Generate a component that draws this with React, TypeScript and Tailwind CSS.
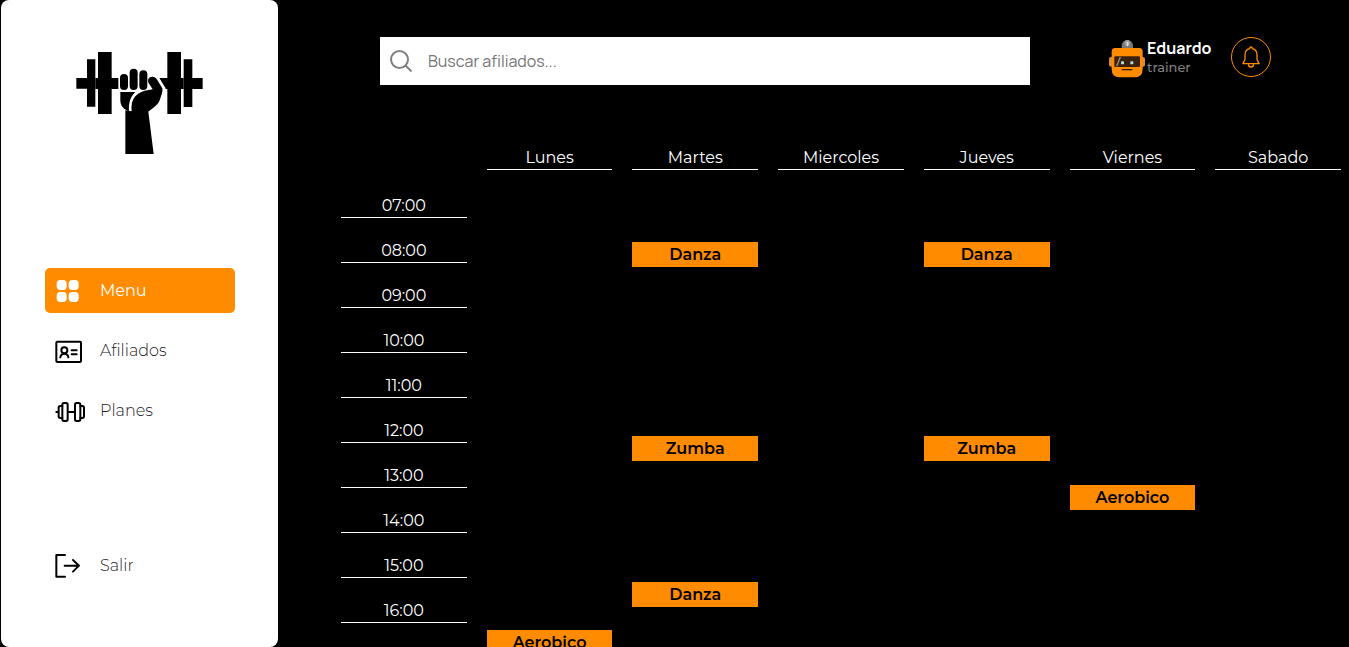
import React from "react";

type Day = { name: string; classes: Record<number, string> };

const HOURS = [7, 8, 9, 10, 11, 12, 13, 14, 15, 16];

const DAYS: Day[] = [
  { name: "Lunes", classes: { 16: "Aerobico" } },
  { name: "Martes", classes: { 8: "Danza", 12: "Zumba", 15: "Danza" } },
  { name: "Miercoles", classes: {} },
  { name: "Jueves", classes: { 8: "Danza", 12: "Zumba" } },
  { name: "Viernes", classes: { 13: "Aerobico" } },
  { name: "Sabado", classes: {} },
];

function Logo() {
  return (
    <svg viewBox="48 33 384 312" className="h-[104px] w-32" role="img" aria-label="Gimnasio">
      <path d="M49 114h32V58h25v142H81v-54H49zM114 36h41v78h20v33h-20v75h-41z" />
      <path d="M106 114h8v33h-8zM363 114h8v33h-8z" />
      <path d="M298 114h24V36h41v186h-41v-75h-7zM371 58h26v56h31v33h-31v54h-26z" />
      <rect x="180" y="102" width="24" height="48" rx="12" />
      <rect x="209" y="86" width="24" height="64" rx="12" />
      <rect x="238" y="91" width="24" height="59" rx="12" />
      <path d="M181 156h45c-14 14-21 31-19 58-16-5-26-17-26-33z" />
      <path d="M214 214c-3-28 8-50 32-59 10-4 22-5 32-7-4-9-14-18-14-26 0-12 18-16 26-5l17 28c2 8-2 18-6 30-4 18-19 26-36 40l16 127h-85V211z" />
      <path d="M212 213c-3-31 10-51 30-60" fill="none" stroke="#fff" strokeWidth="5" />
      <path d="M293 113l22 34" fill="none" stroke="#fff" strokeWidth="6" />
    </svg>
  );
}

function NavIcon({ children }: { children: React.ReactNode }) {
  return (
    <svg
      viewBox="0 0 96 93"
      className="h-[31px] w-8 shrink-0"
      fill="none"
      stroke="currentColor"
      strokeWidth="6"
      strokeLinecap="round"
      strokeLinejoin="round"
      aria-hidden="true"
    >
      {children}
    </svg>
  );
}

function NavLink({ label, icon, active = false }: { label: string; icon: React.ReactNode; active?: boolean }) {
  return (
    <a
      href="#"
      aria-current={active ? "page" : undefined}
      className={
        active
          ? "flex h-[45px] items-center gap-[15px] rounded-[5px] bg-[#ff8c00] pl-2 text-white"
          : "flex h-[45px] items-center gap-[15px] rounded-[5px] pl-2 text-black"
      }
    >
      <NavIcon>{icon}</NavIcon>
      <span className={active ? "" : "font-light text-[#222]"}>{label}</span>
    </a>
  );
}

function Sidebar() {
  return (
    <aside className="ml-px flex w-[277px] shrink-0 flex-col rounded-lg bg-white pr-[43px] pl-11">
      <div className="flex h-[268px] shrink-0 justify-center pt-[51px]">
        <Logo />
      </div>
      <nav className="flex flex-col gap-[15px]">
        <NavLink
          active
          label="Menu"
          icon={
            <g fill="currentColor" stroke="none">
              <rect x="11" y="15" width="30" height="30" rx="11" />
              <rect x="47" y="15" width="30" height="30" rx="11" />
              <rect x="11" y="51" width="30" height="30" rx="11" />
              <rect x="47" y="51" width="30" height="30" rx="11" />
            </g>
          }
        />
        <NavLink
          label="Afiliados"
          icon={
            <>
              <rect x="10" y="20" width="74" height="61" rx="3" />
              <circle cx="34" cy="46" r="9" />
              <path d="M22 67c1-8 5-11 12-11s11 3 12 11M56 46h15M56 58h15" />
            </>
          }
        />
        <NavLink
          label="Planes"
          icon={
            <>
              <rect x="28" y="24" width="16" height="54" rx="5" />
              <rect x="66" y="24" width="16" height="54" rx="5" />
              <path d="M28 33h-6q-5 0-5 5v26q0 5 5 5h6M82 33h6q5 0 5 5v26q0 5-5 5h-6M45 51h20M10 51h6" />
            </>
          }
        />
      </nav>
      <div className="mt-[110px]">
        <NavLink label="Salir" icon={<path d="M36 15H10v65h26M35 47h42M60 30l18 17-18 18" />} />
      </div>
    </aside>
  );
}

function Avatar() {
  return (
    <svg viewBox="42 42 108 117" className="h-[39px] w-9 shrink-0" role="img" aria-label="Eduardo">
      <path d="M80 70V62a17 17 0 0 1 34 0v8z" fill="#777" />
      <circle cx="97" cy="54" r="9" fill="#999" />
      <rect x="95" y="50" width="5" height="14" rx="2" fill="#ddd" />
      <rect x="42" y="96" width="108" height="29" rx="6" fill="#d98a3a" />
      <path d="M60 69h73q10 0 10 11v52q0 25-23 25H73q-23 0-23-25V80q0-11 10-11z" fill="#ff8c00" />
      <rect x="58" y="94" width="77" height="32" rx="3" fill="#38220f" />
      <path d="M76 96l-11 28" stroke="#a88b6c" strokeWidth="4" />
      <rect x="78" y="109" width="9" height="9" rx="2" fill="#a9dce5" />
      <rect x="106" y="109" width="9" height="9" rx="2" fill="#a9dce5" />
      <path d="M80 134h32" fill="none" stroke="#38220f" strokeWidth="4" />
    </svg>
  );
}

function Header() {
  return (
    <header className="flex items-start pt-[37px] pr-[78px] pl-[102px]">
      <label className="flex h-12 flex-1 items-center bg-white pl-[9px]">
        <svg viewBox="0 0 24 24" className="mr-[15px] size-6 shrink-0" fill="none" stroke="#808080" strokeWidth="2" aria-hidden="true">
          <circle cx="10.5" cy="10.5" r="8.5" />
          <path d="M16.5 16.5l6 6" />
        </svg>
        <input
          type="search"
          aria-label="Buscar afiliados"
          placeholder="Buscar afiliados..."
          className="min-w-0 flex-1 bg-transparent font-[Manrope,Inter,sans-serif] text-base text-black outline-none placeholder:text-[#757575]"
        />
      </label>
      <div className="ml-[79px] flex">
        <div className="pt-[2px]">
          <Avatar />
        </div>
        <div className="ml-[2px] w-16 whitespace-nowrap pt-[2px]">
          <p className="font-[Manrope,Inter,sans-serif] text-base leading-[19px] font-bold text-white">Eduardo</p>
          <p className="text-[13px] leading-[18px] font-medium text-[#808080]">trainer</p>
        </div>
        <button
          type="button"
          aria-label="Notificaciones"
          className="ml-5 flex size-10 items-center justify-center rounded-full border border-[#ff8c00]"
        >
          <svg
            viewBox="0 0 54 66"
            className="h-[22px] w-[18px]"
            fill="none"
            stroke="#ff8c00"
            strokeWidth="4"
            strokeLinejoin="round"
            aria-hidden="true"
          >
            <path d="M23 8q0-5 4-5t4 5c9 2 14 9 14 19v12c0 7 6 9 6 14H3c0-5 6-7 6-14V27C9 17 14 10 23 8zM19 55q1 8 8 8t8-8" />
          </svg>
        </button>
      </div>
    </header>
  );
}

function Schedule() {
  return (
    <section aria-label="Horario" className="mt-[60px] grid grid-cols-7 gap-5 pr-2 pl-[63px] text-center leading-[26px]">
      <ul className="flex flex-col gap-5 pt-12">
        {HOURS.map((hour) => (
          <li key={hour} className="h-[25px] border-b border-white">
            {`${String(hour).padStart(2, "0")}:00`}
          </li>
        ))}
      </ul>
      {DAYS.map((day) => (
        <div key={day.name} className="flex h-[510px] flex-col justify-between">
          <h2 className="h-[25px] border-b border-white">{day.name}</h2>
          {HOURS.map((hour) => (
            <div key={hour} className="h-[25px]">
              {day.classes[hour] && (
                <p className="h-full bg-[#ff8c00] font-semibold text-black">{day.classes[hour]}</p>
              )}
            </div>
          ))}
        </div>
      ))}
    </section>
  );
}

export default function App() {
  return (
    <div className="flex h-screen overflow-hidden bg-black font-[Montserrat,Inter,sans-serif] text-base text-white">
      <Sidebar />
      <main className="min-w-0 flex-1 overflow-hidden">
        <Header />
        <Schedule />
      </main>
    </div>
  );
}
